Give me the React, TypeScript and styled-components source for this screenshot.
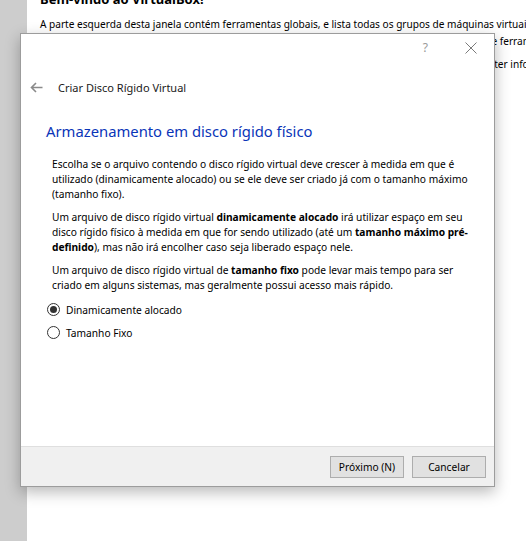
import React from "react";
import styled, { createGlobalStyle } from "styled-components";

const GlobalStyle = createGlobalStyle`
  html, body {
    margin: 0;
    padding: 0;
    background: #ffffff;
  }
  body {
    width: 526px;
    height: 541px;
    overflow: hidden;
    font-family: "Noto Sans", "Open Sans", sans-serif;
  }
`;

const Page = styled.div`
  position: relative;
  display: flex;
  width: 526px;
  height: 541px;
  overflow: hidden;
`;

const Sidebar = styled.div`
  flex: none;
  width: 27px;
  background: #cdcdcd;
`;

const Welcome = styled.div`
  flex: 1;
  min-width: 0;
  padding-left: 13px;
  overflow: hidden;
  white-space: nowrap;
  color: #000000;
  font-size: 10.1px;
`;

const WelcomeTitle = styled.h1`
  margin: -10px 0 0;
  font-size: 13px;
  font-weight: 700;
  line-height: 18px;
`;

const WelcomeText = styled.p`
  margin: 8px 0 0;
  line-height: 17px;
`;

const WelcomeNext = styled.p`
  margin: 6px 0 0;
  line-height: 17px;
`;

const Dialog = styled.div`
  position: absolute;
  left: 20px;
  top: 33px;
  width: 475px;
  height: 454px;
  box-sizing: border-box;
  display: flex;
  flex-direction: column;
  background: #ffffff;
  border: 1px solid #9c9c9c;
  box-shadow: 0 5px 14px rgba(0, 0, 0, 0.28);
  color: #000000;
  font-family: "Noto Sans", "Open Sans", sans-serif;
  font-size: 10.2px;
`;

const TitleBar = styled.div`
  flex: none;
  height: 28px;
  display: flex;
  align-items: center;
  justify-content: flex-end;
  padding-right: 17px;
  gap: 37px;
`;

const HelpGlyph = styled.span`
  color: #9a9a9a;
  font-size: 12px;
  line-height: 12px;
`;

const CloseIcon = styled.svg`
  display: block;
  width: 12px;
  height: 12px;
`;

const Header = styled.div`
  flex: none;
  height: 50px;
  display: flex;
  align-items: center;
  padding-left: 9px;
  gap: 15px;
`;

const BackIcon = styled.svg`
  display: block;
  width: 13px;
  height: 11px;
`;

const HeaderTitle = styled.span`
  font-size: 11px;
  color: #1a1a1a;
`;

const Content = styled.div`
  flex: 1;
  padding-left: 25px;
  padding-right: 12px;
`;

const Heading = styled.h2`
  margin: 9px 0 0;
  font-size: 14.8px;
  font-weight: 400;
  line-height: 20px;
  color: #0a35b8;
`;

const Body = styled.div`
  margin-top: 16px;
  padding-left: 6px;
`;

const Para = styled.p`
  margin: 0 0 8px;
  line-height: 15px;
  white-space: nowrap;
  &:last-child {
    margin-bottom: 0;
  }
`;

const RadioGroup = styled.div`
  margin-top: 5px;
  display: flex;
  flex-direction: column;
`;

const RadioRow = styled.label`
  height: 23px;
  display: flex;
  align-items: center;
  gap: 6px;
  padding-left: 1px;
`;

const RadioCircle = styled.span<{ $checked?: boolean }>`
  flex: none;
  width: 13px;
  height: 13px;
  box-sizing: border-box;
  border-radius: 50%;
  border: 1px solid #333333;
  background: #ffffff;
  display: flex;
  align-items: center;
  justify-content: center;
  &::after {
    content: "";
    width: 7px;
    height: 7px;
    border-radius: 50%;
    background: ${(p) => (p.$checked ? "#333333" : "transparent")};
  }
`;

const Footer = styled.div`
  flex: none;
  height: 39px;
  border-top: 1px solid #dfdfdf;
  background: #f0f0f0;
  display: flex;
  align-items: center;
  justify-content: flex-end;
  padding-right: 8px;
  gap: 8px;
`;

const Button = styled.button`
  width: 74px;
  height: 22px;
  box-sizing: border-box;
  padding: 0;
  background: #e1e1e1;
  border: 1px solid #adadad;
  border-radius: 0;
  color: #000000;
  font-family: "Noto Sans", "Open Sans", sans-serif;
  font-size: 10.2px;
  line-height: 18px;
`;

export default function App() {
  return (
    <>
      <GlobalStyle />
      <Page>
        <Sidebar />
        <Welcome>
          <WelcomeTitle>Bem-vindo ao VirtualBox!</WelcomeTitle>
          <WelcomeText>
            A parte esquerda desta janela contém ferramentas globais, e lista todas os grupos de máquinas virtuais e máquinas virtuais
            <br />
            em seu computador. Você pode importar, adicionar e criar novas VMs usando botões da barra de ferramentas.
          </WelcomeText>
          <WelcomeNext>
            Você pode pressionar a tecla F1 para obter ajuda imediata, ou visite www.virtualbox.org para obter informações.
          </WelcomeNext>
        </Welcome>

        <Dialog>
          <TitleBar>
            <HelpGlyph>?</HelpGlyph>
            <CloseIcon viewBox="0 0 12 12">
              <path d="M0.5 0.5 L11.5 11.5 M11.5 0.5 L0.5 11.5" stroke="#7a7a7a" strokeWidth="1" fill="none" />
            </CloseIcon>
          </TitleBar>
          <Header>
            <BackIcon viewBox="0 0 13 11">
              <path d="M12.5 5.5 H1.5 M6 1 L1.5 5.5 L6 10" stroke="#8a8a8a" strokeWidth="1.6" fill="none" />
            </BackIcon>
            <HeaderTitle>Criar Disco Rígido Virtual</HeaderTitle>
          </Header>
          <Content>
            <Heading>Armazenamento em disco rígido físico</Heading>
            <Body>
              <Para>
                Escolha se o arquivo contendo o disco rígido virtual deve crescer à medida em que é
                <br />
                utilizado (dinamicamente alocado) ou se ele deve ser criado já com o tamanho máximo
                <br />
                (tamanho fixo).
              </Para>
              <Para>
                Um arquivo de disco rígido virtual <b>dinamicamente alocado</b> irá utilizar espaço em seu
                <br />
                disco rígido físico à medida em que for sendo utilizado (até um <b>tamanho máximo pré-</b>
                <br />
                <b>definido</b>), mas não irá encolher caso seja liberado espaço nele.
              </Para>
              <Para>
                Um arquivo de disco rígido virtual de <b>tamanho fixo</b> pode levar mais tempo para ser
                <br />
                criado em alguns sistemas, mas geralmente possui acesso mais rápido.
              </Para>
            </Body>
            <RadioGroup>
              <RadioRow>
                <RadioCircle $checked />
                Dinamicamente alocado
              </RadioRow>
              <RadioRow>
                <RadioCircle />
                Tamanho Fixo
              </RadioRow>
            </RadioGroup>
          </Content>
          <Footer>
            <Button>Próximo (N)</Button>
            <Button>Cancelar</Button>
          </Footer>
        </Dialog>
      </Page>
    </>
  );
}
